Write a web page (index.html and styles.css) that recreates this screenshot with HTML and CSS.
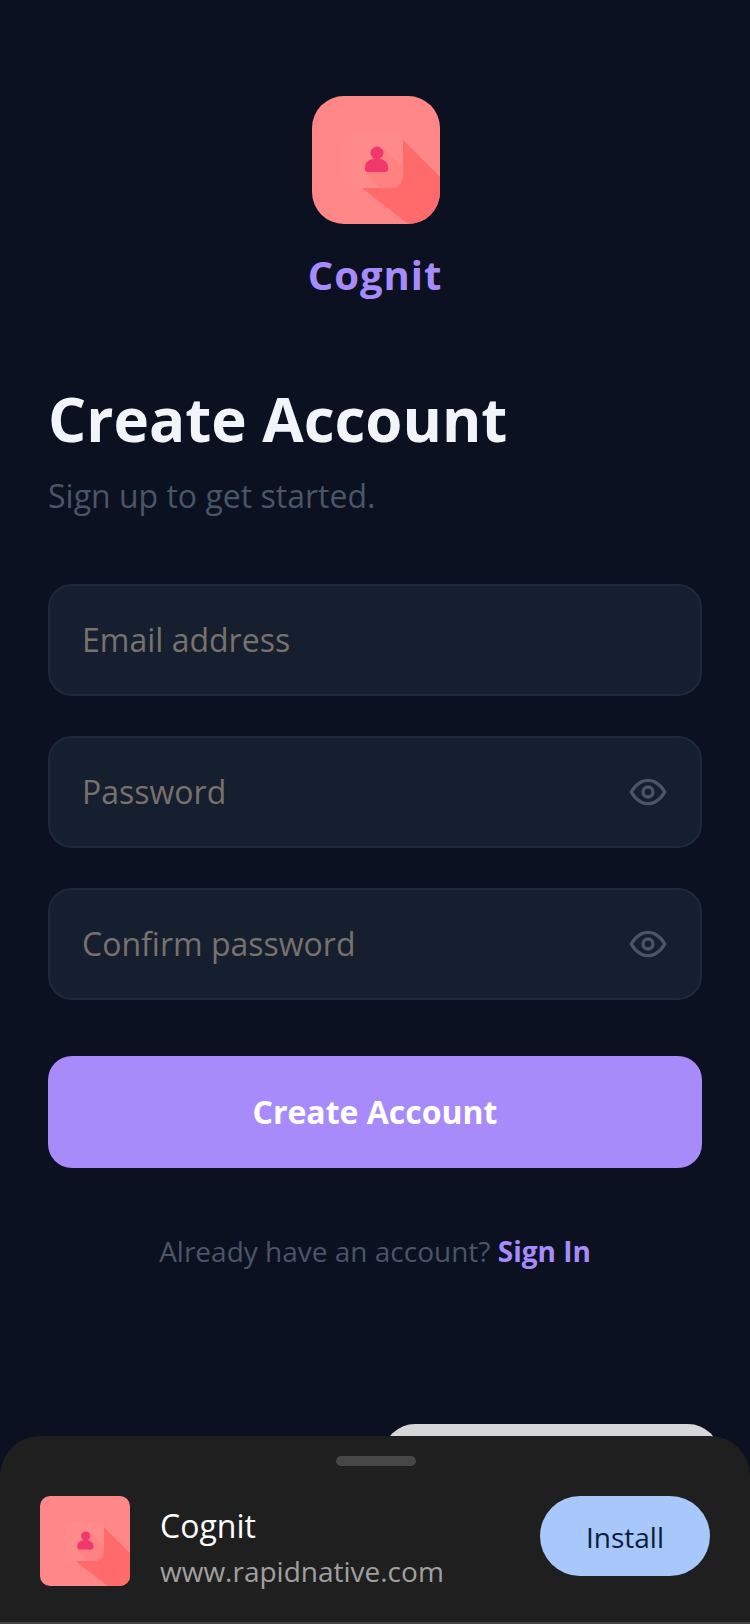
FILE: index.html
```html
<!DOCTYPE html>
<html lang="en">
<head>
    <meta charset="UTF-8">
    <meta name="viewport" content="width=device-width, initial-scale=1.0">
    <title>Cognit - Create Account</title>
    <link rel="stylesheet" href="styles.css">
</head>
<body>
    <svg class="defs" width="0" height="0">
        <defs>
            <symbol id="logo" viewBox="0 0 128 128">
                <rect width="128" height="128" fill="#ff8787"/>
                <!-- long shadow under the card -->
                <polygon points="91,44 128,81 128,128 96,128 50,92 80,92 91,82" fill="#ff6b6b"/>
                <rect x="36" y="37" width="55" height="55" rx="12" fill="#ff8a8a"/>
                <!-- person's shadow on the card -->
                <path d="M71 52L91 72V80Q91 92 79 92H68L53 76z" fill="#ff7476" opacity="0.35"/>
                <circle cx="65" cy="57" r="6.500" fill="#f0386b"/>
                <path d="M53 71c0-5 5-8.500 11.500-8.500S76 66 76 71v2c0 2-1 3-3 3H56c-2 0-3-1-3-3z" fill="#f0386b"/>
            </symbol>
            <symbol id="eye" viewBox="0 0 24 24">
                <path d="M2 12s3.600-7 10-7 10 7 10 7-3.600 7-10 7-10-7-10-7z" fill="none" stroke="currentColor" stroke-width="2" stroke-linecap="round" stroke-linejoin="round"/>
                <circle cx="12" cy="12" r="3" fill="none" stroke="currentColor" stroke-width="2"/>
            </symbol>
        </defs>
    </svg>

    <main class="screen">
        <div class="brand">
            <svg class="brand-logo"><use href="#logo"/></svg>
            <div class="brand-name">Cognit</div>
        </div>

        <h1>Create Account</h1>
        <p class="subtitle">Sign up to get started.</p>

        <form class="form">
            <div class="field">
                <input type="email" placeholder="Email address">
            </div>
            <div class="field">
                <input type="password" placeholder="Password">
                <svg class="eye"><use href="#eye"/></svg>
            </div>
            <div class="field">
                <input type="password" placeholder="Confirm password">
                <svg class="eye"><use href="#eye"/></svg>
            </div>
            <button type="button" class="submit">Create Account</button>
        </form>

        <p class="signin">Already have an account? <a href="#">Sign In</a></p>
    </main>

    <!-- install prompt, sits over the page -->
    <div class="toast-behind"></div>
    <div class="sheet">
        <div class="handle"></div>
        <div class="sheet-row">
            <svg class="sheet-logo"><use href="#logo"/></svg>
            <div class="sheet-text">
                <div class="sheet-name">Cognit</div>
                <div class="sheet-url">www.rapidnative.com</div>
            </div>
            <button type="button" class="install">Install</button>
        </div>
    </div>
</body>
</html>
```

FILE: styles.css
```css
* {
    box-sizing: border-box;
}
html, body {
    margin: 0;
    height: 100%;
}
body {
    position: relative;
    width: 750px;
    height: 1624px;
    overflow: hidden;
    font-family: "Open Sans", sans-serif;
    background-color: #0b1120;
    color: #f1f5f9;
}
.defs {
    position: absolute;
}
.screen {
    padding: 96px 48px 0;
}
.brand {
    display: flex;
    flex-direction: column;
    align-items: center;
}
.brand-logo {
    display: block;
    width: 128px;
    height: 128px;
    margin-left: 2px;
    border-radius: 32px;
    overflow: hidden;
}
.brand-name {
    margin-top: 23px;
    font-size: 40px;
    line-height: 56px;
    font-weight: 700;
    letter-spacing: 1px;
    color: #a78bfa;
}
h1 {
    margin: 76px 0 0;
    font-size: 60px;
    line-height: 80px;
    font-weight: 700;
}
.subtitle {
    margin: 13px 0 0;
    font-size: 32px;
    line-height: 48px;
    color: #4a5568;
}
.form {
    display: flex;
    flex-direction: column;
    gap: 40px;
    margin-top: 64px;
}
.field {
    position: relative;
}
.field input {
    display: block;
    width: 100%;
    height: 112px;
    padding: 0 100px 2px 32px;
    border: 2px solid #1e293b;
    border-radius: 24px;
    background-color: #151f30;
    color: #f8fafc;
    font-family: inherit;
    font-size: 32px;
}
.field input::placeholder {
    color: #78716c;
    opacity: 1;
}
.field input:focus {
    outline: none;
}
.eye {
    position: absolute;
    top: 36px;
    right: 34px;
    width: 40px;
    height: 40px;
    color: #4a5568;
}
.submit {
    height: 112px;
    margin-top: 16px;
    padding-bottom: 2px;
    border: none;
    border-radius: 24px;
    background-color: #a78bfa;
    color: #fff;
    font-family: inherit;
    font-size: 32px;
    font-weight: 700;
}
.signin {
    margin: 61px 0 0;
    text-align: center;
    font-size: 28px;
    line-height: 44px;
    color: #4a5568;
}
.signin a {
    color: #a78bfa;
    font-weight: 700;
    text-decoration: none;
}
.toast-behind {
    position: absolute;
    top: 1424px;
    left: 383px;
    width: 337px;
    height: 60px;
    border-radius: 32px 32px 0 0;
    background-color: #d6d7d9;
}
.sheet {
    position: absolute;
    left: 0;
    right: 0;
    bottom: 0;
    height: 188px;
    padding-top: 20px;
    border-radius: 40px 40px 0 0;
    border-bottom: 2px solid #444;
    background-color: #1f1f1f;
}
.handle {
    width: 80px;
    height: 10px;
    margin: 0 auto;
    border-radius: 5px;
    background-color: #474747;
    transform: translateX(1px);
}
.sheet-row {
    display: flex;
    align-items: flex-start;
    margin-top: 30px;
    padding: 0 40px;
}
.sheet-logo {
    flex: none;
    width: 90px;
    height: 90px;
    border-radius: 10px;
    overflow: hidden;
}
.sheet-text {
    flex: 1;
    margin-left: 30px;
    padding-top: 8px;
}
.sheet-name {
    font-size: 32px;
    line-height: 44px;
    color: #fff;
}
.sheet-url {
    margin-top: 3px;
    font-size: 28px;
    line-height: 40px;
    color: #a0a0a0;
}
.install {
    flex: none;
    width: 170px;
    height: 80px;
    padding-top: 2px;
    border: none;
    border-radius: 40px;
    background-color: #a8c7fa;
    color: #0b1d3a;
    font-family: inherit;
    font-size: 28px;
}
```
